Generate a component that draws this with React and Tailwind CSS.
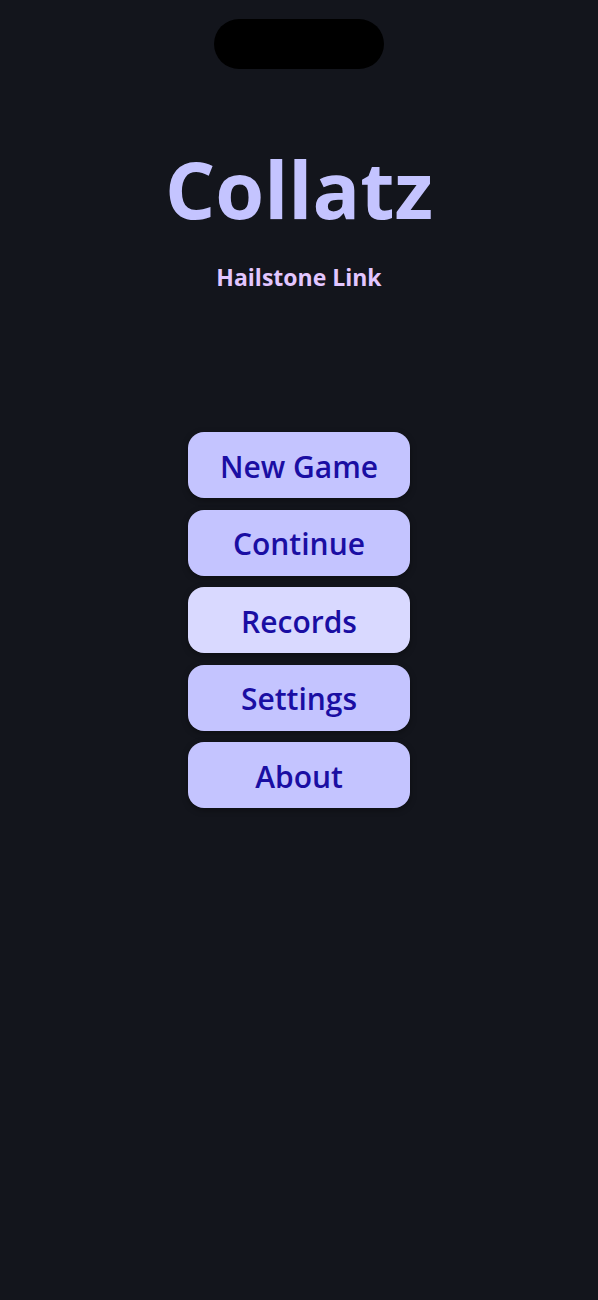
export default function App() {
  const items = ["New Game", "Continue", "Records", "Settings", "About"];
  return (
    <div
      className="min-h-[1300px] w-full bg-[#13151c] flex flex-col items-center"
      style={{ fontFamily: '"Open Sans", sans-serif' }}
    >
      <div className="mt-[19px] h-[50px] w-[170px] rounded-full bg-black" />
      <h1 className="mt-[70px] text-[79px] leading-[100px] font-bold text-[#c4c4ff]">
        Collatz
      </h1>
      <p className="mt-[23px] text-[23px] leading-[30px] font-bold text-[#e2c6ff]">
        Hailstone Link
      </p>
      <div className="mt-[140px] flex flex-col gap-[11.5px]">
        {items.map((t) => (
          <button
            key={t}
            className={`h-[66px] w-[222px] rounded-[16px] pt-[2px] text-[30px] font-semibold text-[#1a0ea3] shadow-[0_2px_6px_rgba(0,0,0,0.35)] ${
              t === "Records" ? "bg-[#d9d9ff]" : "bg-[#c4c4ff]"
            }`}
          >
            {t}
          </button>
        ))}
      </div>
    </div>
  );
}
